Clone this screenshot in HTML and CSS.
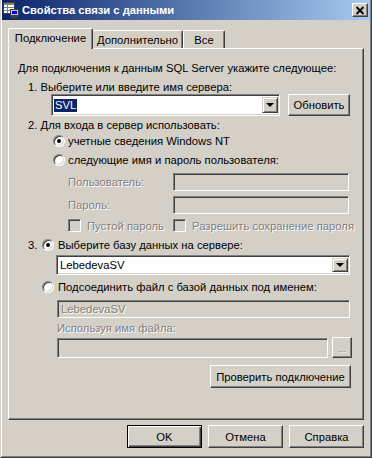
FILE: index.html
```html
<!DOCTYPE html>
<html lang="ru">
<head>
  <meta charset="UTF-8" />
  <title>Свойства связи с данными</title>
  <link rel="stylesheet" href="styles.css">
</head>
<body>
  <div class="window">
    <div class="frame">
      <div class="titlebar">
        <svg class="app-icon" width="16" height="16" viewBox="0 0 16 16">
          <rect x="0.5" y="0.5" width="11" height="11" fill="#fff" stroke="#404040"/>
          <rect x="1" y="1" width="10" height="2" fill="#808080"/>
          <path d="M1 5.5h10M1 8.5h10M4.5 3v8" stroke="#808080" fill="none"/>
          <rect x="7.5" y="7.5" width="8" height="6" fill="#c0c0c0" stroke="#404040"/>
          <rect x="9" y="9" width="5" height="3" fill="#0000ff"/>
          <rect x="8" y="14" width="7" height="2" fill="#404040"/>
        </svg>
        <span class="title">Свойства связи с данными</span>
        <div class="close-btn">
          <svg width="10" height="9" viewBox="0 0 10 9">
            <path d="M1.5 1 L8.5 8 M8.5 1 L1.5 8" stroke="#000" stroke-width="1.8" fill="none"/>
          </svg>
        </div>
      </div>

      <div class="tabs">
        <div class="tab tab-active">Подключение</div>
        <div class="tab tab-second">Дополнительно</div>
        <div class="tab tab-third">Все</div>
      </div>

      <div class="panel">
        <div class="row intro">Для подключения к данным SQL Server укажите следующее:</div>
        <div class="row step">1. Выберите или введите имя сервера:</div>
        <div class="row server-row">
          <div class="field combo server-combo">
            <span class="selected-text">SVL</span>
            <span class="drop-btn"></span>
          </div>
          <div class="btn refresh-btn">Обновить</div>
        </div>
        <div class="row step step2">2. Для входа в сервер использовать:</div>
        <div class="row option auth-nt">
          <span class="radio checked"></span>
          <span>учетные сведения Windows NT</span>
        </div>
        <div class="row option auth-sql">
          <span class="radio"></span>
          <span>следующие имя и пароль пользователя:</span>
        </div>
        <div class="row cred-row user-row">
          <span class="cred-label disabled">Пользователь:</span>
          <div class="field field-disabled cred-input"></div>
        </div>
        <div class="row cred-row pass-row">
          <span class="cred-label disabled">Пароль:</span>
          <div class="field field-disabled cred-input"></div>
        </div>
        <div class="row check-row">
          <div class="check-item first-check">
            <span class="checkbox"></span>
            <span class="disabled">Пустой пароль</span>
          </div>
          <div class="check-item">
            <span class="checkbox"></span>
            <span class="disabled">Разрешить сохранение пароля</span>
          </div>
        </div>
        <div class="row step3">
          <span class="step-num">3.</span>
          <span class="radio checked"></span>
          <span>Выберите базу данных на сервере:</span>
        </div>
        <div class="row db-row">
          <div class="field combo db-combo">
            <span class="value-text">LebedevaSV</span>
            <span class="drop-btn"></span>
          </div>
        </div>
        <div class="row attach-row">
          <span class="radio"></span>
          <span>Подсоединить файл с базой данных под именем:</span>
        </div>
        <div class="row attach-name">
          <div class="field field-disabled attach-input"><span class="disabled">LebedevaSV</span></div>
        </div>
        <div class="row file-label disabled">Используя имя файла:</div>
        <div class="row file-row">
          <div class="field field-disabled file-input"></div>
          <div class="btn browse-btn"><span class="disabled">...</span></div>
        </div>
        <div class="row test-row">
          <div class="btn test-btn">Проверить подключение</div>
        </div>
      </div>

      <div class="buttons">
        <div class="btn dlg-btn default-btn">OK</div>
        <div class="btn dlg-btn">Отмена</div>
        <div class="btn dlg-btn">Справка</div>
      </div>
    </div>
  </div>
</body>
</html>
```

FILE: styles.css
```css
body {
  margin: 0;
  padding: 0;
  font-family: "Liberation Sans", Arial, sans-serif;
  font-size: 11.25px;
  color: #000;
  background: #d4d0c8;
}

.window {
  width: 372px;
  height: 458px;
  box-sizing: border-box;
  border-left: 1px solid #d4d0c8;
  border-right: 1px solid #404040;
  border-bottom: 1px solid #404040;
}

.frame {
  height: 100%;
  box-sizing: border-box;
  border-left: 1px solid #fff;
  border-right: 1px solid #808080;
  border-bottom: 1px solid #808080;
}

/* title bar */
.titlebar {
  height: 20px;
  display: flex;
  align-items: center;
  padding: 0 2px 0 1px;
  background: linear-gradient(to right, #0a246a, #a6caf0);
  color: #fff;
}

.app-icon {
  flex: none;
}

.title {
  margin-left: 3px;
  font-weight: bold;
  font-size: 11.2px;
  flex: 1;
}

.close-btn {
  width: 16px;
  height: 14px;
  box-sizing: border-box;
  display: flex;
  align-items: center;
  justify-content: center;
  background: #d4d0c8;
  border: 1px solid;
  border-color: #fff #404040 #404040 #fff;
  box-shadow: inset -1px -1px 0 #808080;
}

/* tabs */
.tabs {
  position: relative;
  z-index: 1;
  display: flex;
  align-items: flex-end;
  height: 21px;
  margin: 8px 0 -1px 6px;
}

.tab {
  box-sizing: border-box;
  height: 18px;
  margin-bottom: 1px;
  border-top: 1px solid #fff;
  border-left: 1px solid #fff;
  border-right: 1px solid #404040;
  box-shadow: inset -1px 0 0 #808080;
  border-radius: 2px 2px 0 0;
  background: #d4d0c8;
  line-height: 18px;
  text-align: center;
}

.tab-active {
  width: 85px;
  height: 21px;
  margin-bottom: 0;
  line-height: 18px;
}

.tab-second {
  width: 90px;
  border-left: none;
}

.tab-third {
  width: 42px;
}

/* panel */
.panel {
  box-sizing: border-box;
  height: 372px;
  margin: 0 6px;
  border: 1px solid;
  border-color: #fff #404040 #404040 #fff;
  box-shadow: inset -1px -1px 0 #808080;
  padding-top: 12px;
}

.row {
  display: flex;
  align-items: center;
  height: 14px;
  line-height: 14px;
  white-space: nowrap;
}

.intro {
  padding-left: 9px;
}

.step {
  margin-top: 5px;
  padding-left: 19px;
}

.step2 {
  margin-top: 2px;
}

.server-row {
  height: 22px;
  padding-left: 42px;
}

.option {
  padding-left: 44px;
  gap: 3px;
}

.auth-nt {
  margin-top: 2px;
}

.auth-sql {
  margin-top: 5px;
}

.cred-row {
  height: 18px;
  padding-left: 59px;
}

.user-row {
  margin-top: 6px;
}

.pass-row {
  margin-top: 5px;
}

.cred-label {
  width: 105px;
}

.cred-input {
  width: 176px;
  height: 18px;
}

.check-row {
  height: 13px;
  margin-top: 5px;
  padding-left: 59px;
}

.check-item {
  display: flex;
  align-items: center;
  gap: 6px;
}

.first-check {
  width: 105px;
}

.step3 {
  margin-top: 6px;
  padding-left: 19px;
}

.step-num {
  width: 14px;
}

.step3 .radio {
  margin-right: 4px;
}

.db-row {
  height: 20px;
  margin-top: 3px;
  padding-left: 47px;
}

.attach-row {
  margin-top: 5px;
  padding-left: 33px;
  gap: 4px;
}

.attach-name {
  height: 18px;
  margin-top: 6px;
  padding-left: 48px;
}

.file-label {
  margin-top: 3px;
  padding-left: 48px;
}

.file-row {
  height: 21px;
  margin-top: 2px;
  padding-left: 48px;
  gap: 4px;
}

.test-row {
  height: 23px;
  margin-top: 7px;
  padding-left: 201px;
}

/* controls */
.field {
  box-sizing: border-box;
  display: flex;
  align-items: center;
  background: #fff;
  border: 1px solid;
  border-color: #808080 #fff #fff #808080;
  box-shadow: inset 1px 1px 0 #404040, inset -1px -1px 0 #d4d0c8;
}

.field-disabled {
  background: #d4d0c8;
}

.combo {
  padding: 2px 1px 2px 2px;
}

.server-combo {
  width: 229px;
  height: 22px;
  margin-right: 8px;
}

.db-combo {
  width: 294px;
  height: 20px;
}

.selected-text {
  background: #0a246a;
  color: #fff;
  padding: 0 1px;
  line-height: 13px;
}

.value-text {
  padding-left: 1px;
}

.drop-btn {
  position: relative;
  margin-left: auto;
  width: 16px;
  height: 100%;
  box-sizing: border-box;
  background: #d4d0c8;
  border: 1px solid;
  border-color: #d4d0c8 #404040 #404040 #d4d0c8;
  box-shadow: inset 1px 1px 0 #fff, inset -1px -1px 0 #808080;
}

.drop-btn::after {
  content: "";
  position: absolute;
  left: 3px;
  top: 50%;
  margin-top: -2px;
  border-left: 4px solid transparent;
  border-right: 4px solid transparent;
  border-top: 4px solid #000;
  width: 0;
  height: 0;
  box-sizing: content-box;
  margin-left: -0.5px;
}

.attach-input {
  width: 293px;
  height: 18px;
  padding-left: 3px;
}

.file-input {
  width: 271px;
  height: 20px;
}

.radio {
  flex: none;
  position: relative;
  width: 12px;
  height: 12px;
  box-sizing: border-box;
  border-radius: 50%;
  border: 1px solid;
  border-color: #808080 #fff #fff #808080;
  background: #fff;
  box-shadow: inset 1px 1px 0 #404040, inset -1px -1px 0 #d4d0c8;
}

.radio.checked::after {
  content: "";
  position: absolute;
  left: 3px;
  top: 3px;
  width: 4px;
  height: 4px;
  border-radius: 50%;
  background: #000;
}

.checkbox {
  flex: none;
  width: 13px;
  height: 13px;
  box-sizing: border-box;
  border: 1px solid;
  border-color: #808080 #fff #fff #808080;
  background: #d4d0c8;
  box-shadow: inset 1px 1px 0 #404040, inset -1px -1px 0 #d4d0c8;
}

.disabled {
  color: #808080;
  text-shadow: 1px 1px 0 #fff;
}

.btn {
  box-sizing: border-box;
  display: flex;
  align-items: center;
  justify-content: center;
  background: #d4d0c8;
  border: 1px solid;
  border-color: #fff #404040 #404040 #fff;
  box-shadow: inset -1px -1px 0 #808080;
}

.refresh-btn {
  width: 62px;
  height: 22px;
}

.browse-btn {
  width: 20px;
  height: 21px;
  align-items: flex-end;
  padding-bottom: 3px;
  font-size: 9px;
  line-height: 9px;
}

.test-btn {
  width: 141px;
  height: 23px;
}

/* dialog buttons */
.buttons {
  display: flex;
  justify-content: flex-end;
  gap: 6px;
  margin: 5px 6px 0 0;
}

.dlg-btn {
  width: 75px;
  height: 23px;
}

.default-btn {
  border-color: #000;
  box-shadow: inset 1px 1px 0 #fff, inset -1px -1px 0 #404040, inset -2px -2px 0 #808080;
}
```
